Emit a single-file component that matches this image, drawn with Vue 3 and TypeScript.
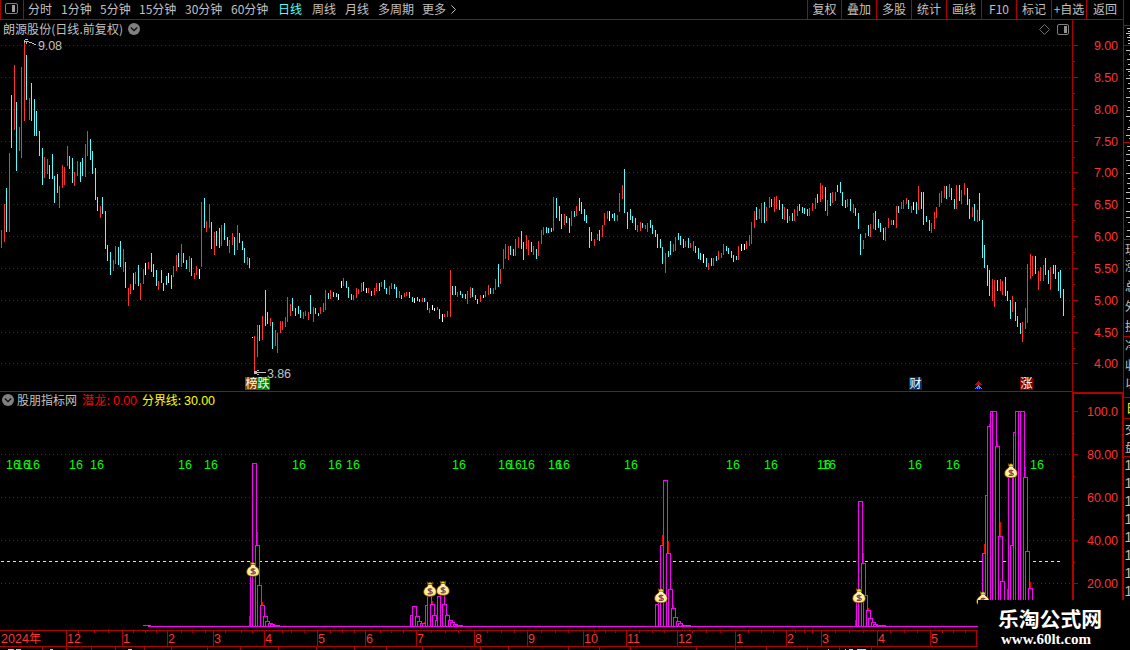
<script setup lang="ts">
interface Candle { x: number; top: number; h: number; kind: string }
interface Bar { x: number; top: number }

const periods = ['分时', '1分钟', '5分钟', '15分钟', '30分钟', '60分钟', '日线', '周线', '月线', '多周期', '更多']
const tools = ['复权', '叠加', '多股', '统计', '画线', 'F10', '标记', '+自选', '返回']

// One entry per session: colour code, x, high, low
const candleData = `
r1,230,248 r4,204,242 c6,188,232 r9,153,232 c11,95,148 r14,65,130 c16,102,171 r19,127,151 r21,67,158 r24,43,121
c26,55,100 r29,98,120 c31,83,121 c34,99,136 c36,111,136 c39,131,156 c42,148,185 r44,157,178 r47,159,174 c49,165,179
c52,154,179 c54,176,203 c57,174,193 r59,186,208 r62,165,188 r64,167,185 r67,146,166 c69,156,169 c72,158,183 r74,172,186
r77,161,176 c80,162,182 c82,158,176 r85,144,177 r87,131,156 c90,139,160 c92,151,174 c95,168,200 c97,197,211 r100,206,218
c102,197,214 c105,211,249 c107,245,261 c110,252,275 r113,260,271 r115,246,264 c118,247,265 c120,241,267 r123,249,272 c125,262,288
r128,288,306 r130,284,294 c133,273,290 r135,272,284 c138,265,286 r140,283,300 r143,269,284 w145,263,275 r148,262,269 c151,253,272
c153,264,277 c156,270,286 r158,281,290 c161,270,283 c163,283,291 c166,276,285 w168,273,283 c171,275,289 r173,266,277 r176,255,271
c178,253,267 r181,244,267 c183,253,263 c186,260,269 r189,256,272 c191,258,276 r194,273,279 r196,266,275 w199,269,279 r201,202,267
c204,198,228 r206,221,232 r209,204,228 c211,222,249 r214,232,255 c216,231,246 c219,228,248 r221,225,246 c224,223,240 c227,237,246
r229,240,253 r232,233,245 c234,237,255 r237,225,250 c239,233,243 c242,241,250 c244,248,263 r247,257,265 c249,258,268 w252,337,338
r254,336,371 r257,325,357 c259,325,341 r262,316,340 c265,290,326 c267,312,324 r270,318,326 c272,322,349 r275,330,346 r277,333,353
r280,321,333 r282,321,330 r285,317,327 r287,297,322 r290,304,316 c292,298,311 c295,308,316 c298,306,314 c300,310,318 r303,312,319
r305,311,316 r308,312,320 c310,295,314 r313,307,322 c315,308,314 c318,313,316 r320,307,314 r323,303,312 r325,290,310 c328,293,299
r330,290,299 c333,292,297 c336,293,297 w338,294,300 w341,281,288 r343,278,286 c346,281,288 c348,287,298 c351,294,300 r353,295,300
r356,288,298 r358,289,294 r361,283,292 c363,282,291 w366,288,293 r368,288,293 c371,291,296 r374,288,295 r376,283,291 c379,283,291
r381,282,287 c384,280,289 c386,288,294 r389,286,295 r391,283,289 c394,284,289 c396,287,298 r399,291,298 c401,295,299 r404,293,297
r406,292,296 c409,292,298 c412,297,302 w414,298,303 c417,297,301 c419,299,302 r422,298,302 c424,298,302 c427,302,310 r429,308,313
w432,305,310 w434,308,311 r437,307,310 c439,309,319 w442,314,322 r444,314,317 r447,311,317 r450,270,317 c452,286,295 c455,286,295
r457,292,297 c460,291,295 c462,294,298 c465,294,299 r467,291,304 r470,287,298 c472,288,297 c475,295,300 c477,299,304 r480,295,302
w483,295,298 r485,291,297 r488,285,295 c490,288,294 r493,288,294 r495,279,290 c498,264,287 r500,269,284 r503,249,269 r505,244,259
r508,246,260 c510,246,255 c513,249,256 r515,239,256 r518,237,248 c521,231,249 c523,242,260 r526,235,249 r528,240,255 c531,242,252
r533,246,255 c536,249,259 r538,241,256 r541,230,244 r543,227,235 c546,227,233 c548,228,233 c551,228,232 r553,197,231 c556,198,218
c559,206,221 c561,214,229 r564,214,225 c566,216,223 c569,218,233 r571,211,226 c574,211,217 r576,206,216 c579,198,211 c581,202,214
c584,209,221 c586,215,223 c589,227,248 c591,232,241 r594,239,246 r597,234,240 c599,230,241 r602,225,237 r604,213,225 r607,211,219
w609,211,221 c612,214,218 c614,213,221 r617,215,221 r619,193,212 r622,185,199 c624,169,213 c627,212,229 c630,209,220 c632,216,223
c635,218,230 r637,225,232 r640,222,231 c642,223,228 r645,225,229 r647,223,232 c650,220,228 c652,225,234 c655,230,237 c657,234,248
c660,239,248 c662,247,264 r665,253,273 c668,251,257 c670,241,255 r673,244,252 r675,237,251 c678,233,240 c680,236,245 c683,239,248
r685,241,247 c688,238,248 r690,243,248 r693,241,251 c695,246,253 c698,248,259 c700,253,260 w703,254,263 c706,258,267 r708,263,270
c711,258,266 r713,258,266 c716,256,261 r718,251,260 r721,253,258 r723,244,255 c726,246,251 c728,248,254 c731,251,258 c733,255,262
c736,256,260 r738,246,260 w741,244,251 w744,244,250 r746,241,249 r749,235,246 r751,222,244 r754,211,228 c756,207,220 r759,209,219
r761,203,223 c764,202,223 r766,207,221 r769,197,208 c771,199,207 r774,197,212 r776,196,209 c779,200,210 c782,204,219 r784,207,220
c787,209,223 r789,216,221 c792,213,221 r794,209,221 r797,206,216 c799,204,211 c802,207,213 c804,208,214 c807,209,216 r809,208,216
r812,203,211 r815,198,209 c817,194,203 r820,183,202 r822,185,199 c825,187,211 r827,200,216 c830,193,206 r832,192,203 r835,192,201
c837,185,192 c840,182,193 c842,192,206 c845,200,208 r847,199,207 c850,199,211 r853,204,213 c855,208,216 c858,213,229 c860,234,255
r863,240,249 r865,233,238 c868,225,236 r870,224,237 r873,213,229 c875,211,230 c878,219,228 c880,223,232 c883,228,240 r885,227,241
r888,218,228 r891,220,225 c893,220,225 r896,206,228 c898,206,213 r901,202,209 r903,200,209 r906,198,204 c908,200,209 r911,206,213
w913,202,210 c916,202,214 r918,186,210 c921,192,209 c923,192,225 c926,216,222 c929,220,231 r931,223,233 r934,212,229 r936,207,218
r939,193,207 r941,191,203 r944,186,198 c946,186,199 r949,184,197 c951,188,200 c954,199,209 r956,185,209 c959,185,201 r961,190,204
r964,183,195 c967,188,205 c969,199,219 r972,207,217 c974,204,221 r977,210,222 c979,193,221 c982,220,258 c984,245,268 c987,265,286
c989,270,296 r992,279,301 r994,280,307 c997,280,291 r1000,279,291 r1002,281,295 c1005,277,296 c1007,291,301 c1010,300,319 r1012,296,312
c1015,302,321 c1017,316,327 c1020,323,334 r1022,322,342 r1025,308,329 r1027,264,323 r1030,254,279 r1032,256,276 c1035,256,274 r1038,271,290
r1040,267,281 r1043,265,281 c1045,258,275 c1048,270,284 r1050,267,290 c1053,265,274 c1055,265,279 c1058,272,291 c1060,270,298 c1063,289,316`

const candles: Candle[] = candleData.trim().split(/\s+/).map((s) => {
  const [x, top, bottom] = s.slice(1).split(',').map(Number)
  return { kind: s[0], x, top, h: bottom - top }
})

const parseBars = (s: string): Bar[] => s.trim().split(/\s+/).map((p) => {
  const [x, top] = p.split(',').map(Number)
  return { x, top }
})

const bars = parseBars(`252,575 254,463 257,545 259,585 262,605 265,616 267,621 270,623 272,624 275,625 277,625
412,615 414,606 417,616 419,621 422,623 424,623 427,605 429,596 432,604 434,615 437,620 439,596 442,594 444,604 447,615 450,620 452,622 455,624 457,625 460,625
657,604 660,592 662,545 665,480 668,553 670,589 673,608 675,617 678,621 680,623 683,625 685,625 688,625
858,595 860,501 863,563 865,595 868,610 870,618 873,622 875,624 878,625 880,625 883,625
984,553 987,495 989,426 992,411 994,411 997,446 1000,536 1002,581 1010,470 1012,545 1015,432 1017,411 1020,411 1022,411 1025,477 1027,551 1030,588`)

// Red stems: x, top, height
const stems = [
  [257, 532, 13], [262, 602, 3], [249, 616, 10], [432, 601, 3], [424, 622, 4], [447, 614, 1],
  [662, 535, 10], [668, 541, 12], [673, 605, 3], [863, 553, 10], [868, 608, 2], [855, 620, 6],
  [984, 544, 9], [989, 424, 2], [997, 441, 5], [1000, 522, 14], [1007, 589, 12], [1025, 467, 10], [1030, 582, 6],
]

const priceTicks = [45, 77, 109, 141, 172, 204, 236, 268, 300, 332, 363].map((y, i) => ({ y, label: (9 - i * 0.5).toFixed(2) }))
const priceMinor = [61, 93, 125, 157, 188, 220, 252, 284, 316, 348]
const indTicks = [
  { y: 411, label: '100.0' }, { y: 454, label: '80.00' }, { y: 497, label: '60.00' },
  { y: 540, label: '40.00' }, { y: 583, label: '20.00' },
]
const indMinor = [433, 476, 519, 562]
const gridLines = [...priceTicks.map((t) => t.y), 454, 497, 540, 583]

const signals = [7, 17, 27, 70, 91, 179, 205, 293, 329, 347, 453, 499, 509, 522, 549, 557, 625, 727, 765, 818, 823, 909, 947, 1031]
const bags = [[246, 561], [423, 581], [436, 580], [654, 587.5], [852, 587.5], [1004, 462.5], [976, 590.5]]

const months = [
  { x: 66, t: '12' }, { x: 122, t: '1' }, { x: 167, t: '2' }, { x: 213, t: '3' }, { x: 264, t: '4' }, { x: 317, t: '5' },
  { x: 365, t: '6' }, { x: 416, t: '7' }, { x: 474, t: '8' }, { x: 527, t: '9' }, { x: 583, t: '10' }, { x: 626, t: '11' },
  { x: 677, t: '12' }, { x: 735, t: '1' }, { x: 786, t: '2' }, { x: 821, t: '3' }, { x: 877, t: '4' }, { x: 930, t: '5' }, { x: 976, t: '' },
]
const weekTicks = [78, 94, 108, 133, 145, 156, 181, 192, 205, 225, 241, 252, 282, 291, 304, 330, 342, 354, 380, 391, 403, 431, 445, 458,
  487, 501, 514, 541, 555, 568, 594, 605, 615, 639, 652, 664, 692, 706, 720, 748, 761, 773, 795, 804, 812, 835, 849, 863, 890, 904, 917, 942, 953, 965]
const lowerTicks = [42, 66, 91, 115, 144, 171, 207, 240, 278, 316, 354, 386, 422, 480, 508, 568, 599, 630, 696, 735, 766, 807, 839, 871]
const sideRules = [25, 45, 142, 239, 336, 397, 418, 456]
// Left edges of the quote column's row labels: y, inset
const sideDashes = [
  [28, 1], [31, 2], [33, 0], [35, 3], [37, 1], [40, 2], [43, 2], [50, 0], [54, 3], [59, 1], [64, 2], [69, 0], [71, 2], [75, 3], [78, 0],
  [83, 2], [88, 1], [91, 3], [97, 0], [101, 2], [107, 2], [110, 1], [116, 0], [120, 3], [127, 2], [129, 1], [135, 0], [138, 3],
  [146, 1], [150, 2], [154, 0], [160, 0], [165, 2], [173, 0], [178, 2], [183, 1], [188, 2], [192, 0], [198, 0], [202, 2], [211, 0],
  [217, 0], [222, 2], [230, 1], [236, 0],
]
const sideGlyphs = [
  { t: '现', y: 254 }, { t: '涨', y: 271 }, { t: '总', y: 291 }, { t: '外', y: 311 },
  { t: '换', y: 331 }, { t: '净', y: 350 }, { t: '收', y: 370 }, { t: '以', y: 388 },
]
const sideOnes = [465, 483, 501, 519, 537, 555, 573, 591]
const badges = [
  { x: 245, t: '榜', c: '#804000' }, { x: 257, t: '跌', c: '#008000' },
  { x: 909, t: '财', c: '#003468' }, { x: 1020, t: '涨', c: '#800000' },
]
</script>

<template>
  <div class="app">
    <header class="toolbar">
      <div class="panel-toggle">
        <svg width="13" height="11" viewBox="0 0 13 11">
          <rect x=".5" y=".5" width="12" height="10" rx="1.5" fill="none" stroke="#808080" />
          <rect x="7" y="2" width="3" height="7" fill="#a0a0a0" />
        </svg>
      </div>
      <nav class="periods">
        <span v-for="p in periods" :key="p" :class="{ active: p === '日线' }">{{ p }}<svg v-if="p === '更多'" class="more" width="6" height="9" viewBox="0 0 6 9"><path d="M.5 .5 4.5 4.5 .5 8.5" fill="none" stroke="#c0c0c0" /></svg></span>
      </nav>
      <nav class="tools">
        <span v-for="t in tools" :key="t">{{ t }}</span>
      </nav>
    </header>

    <svg class="chart" width="1130" height="650" viewBox="0 0 1130 650" shape-rendering="crispEdges">
      <defs>
        <radialGradient id="gold" cx=".5" cy=".5" r=".6">
          <stop offset="0" stop-color="#fff8dc" /><stop offset=".55" stop-color="#fff0a0" /><stop offset="1" stop-color="#f0dc00" />
        </radialGradient>
        <symbol id="bag" viewBox="0 0 14 16">
          <path d="M4 1 5.5 2 7 1 8.500 2 10 1 9 4H5Z" fill="#f0d818" stroke="#6b4414" stroke-width=".7" />
          <path d="M5 4h4l.7 1.500C12 6.500 13.400 8.500 13.400 11c0 3-2.400 4.400-6.400 4.400S.6 14 .6 11c0-2.500 1.400-4.500 3.700-5.500Z" fill="url(#gold)" stroke="#5c3414" stroke-width=".8" />
          <path d="M5.300 4.700h3.400" stroke="#fff" stroke-width="1.200" />
          <path d="M9.300 8.400C8.500 7.600 5 7.500 5 9.100s4.400 1 4.400 2.600-3.500 1.600-4.600.6M7.100 6.900v6.600" fill="none" stroke="#804040" stroke-width="1.200" />
        </symbol>
      </defs>

      <g class="grid">
        <line v-for="y in gridLines" :key="y" x1="1" x2="1071" :y1="y + .5" :y2="y + .5" />
      </g>
      <g>
        <rect v-for="c in candles" :key="c.x" :class="c.kind" :x="c.x" :y="c.top" width="1" :height="c.h" />
      </g>

      <g class="frame">
        <path d="M0 391.500H1072M1072.500 20V392M1123.500 0V392" />
        <path d="M0 630.500H978M0 646.500H978" />
        <path class="thick" d="M1073 601V393H1123V601" />
        <path v-for="t in priceTicks" :key="t.y" :d="`M1073 ${t.y + .5}h5`" />
        <path v-for="y in priceMinor" :key="y" :d="`M1073 ${y + .5}h2`" />
        <path v-for="t in indTicks" :key="t.y" :d="`M1074 ${t.y + .5}h4`" />
        <path v-for="y in indMinor" :key="y" :d="`M1074 ${y + .5}h1`" />
        <path v-for="m in months" :key="m.x" :d="`M${m.x + .5} 630v17`" />
        <path v-for="x in weekTicks" :key="x" :d="`M${x + .5} 631v2`" />
        <path v-for="x in lowerTicks" :key="x" :d="`M${x + .5} 647v3`" />
        <path v-for="y in sideRules" :key="y" :d="`M1124 ${y + .5}h6`" />
      </g>

      <g class="side">
        <path v-for="d in sideDashes" :key="d[0]" :d="`M${1126 + d[1]} ${d[0] + .5}H1130`" stroke="#c0c0c0" />
        <text v-for="g in sideGlyphs" :key="g.y" x="1125" :y="g.y">{{ g.t }}</text>
        <text class="yellow" x="1126" y="413">日</text>
        <text x="1125" y="434">交</text>
        <text x="1125" y="452">盘</text>
        <text v-for="y in sideOnes" :key="y" class="one" x="1124.500" :y="y + 5">1</text>
      </g>

      <g class="axis">
        <text v-for="t in priceTicks" :key="t.y" x="1094" :y="t.y + 5" textLength="24">{{ t.label }}</text>
        <text v-for="t in indTicks" :key="t.y" x="1087" :y="t.y + 5" textLength="31">{{ t.label }}</text>
        <text x="1" y="643" textLength="28">2024</text>
        <text class="cjk" x="29" y="643">年</text>
        <text v-for="m in months" :key="m.x" x="0" y="643" :transform="`translate(${m.x + 1} 0)`">{{ m.t }}</text>
      </g>

      <g class="heading">
        <text x="3" y="34" textLength="120">朗源股份(日线.前复权)</text>
        <text x="17" y="404.500" textLength="60">股朋指标网</text>
        <text class="red" x="82" y="404.500" textLength="28">潜龙:</text>
        <text class="red num" x="113" y="404.500" textLength="24">0.00</text>
        <text class="yellow" x="142" y="404.500" textLength="39">分界线:</text>
        <text class="yellow num" x="184" y="404.500" textLength="31">30.00</text>
        <text class="num" x="38" y="50" textLength="24">9.08</text>
        <text class="num" x="267" y="378" textLength="24">3.86</text>
      </g>

      <g class="smooth">
        <circle cx="134" cy="29" r="6" fill="#808080" />
        <path d="M130.800 27.500 134 30.500 137.200 27.500" fill="none" stroke="#101010" stroke-width="1.300" />
        <circle cx="8" cy="400" r="6" fill="#808080" />
        <path d="M4.800 398.500 8 401.500 11.200 398.500" fill="none" stroke="#101010" stroke-width="1.300" />
        <path d="M1044.500 24.500 1049.500 29.500 1044.500 34.500 1039.500 29.500Z" fill="none" stroke="#707070" />
        <rect x="1057.500" y="24.500" width="11" height="10" rx="1.500" fill="none" stroke="#808080" />
        <rect x="1064" y="26" width="3" height="7" fill="#909090" />
      </g>
      <path d="M25 39h3v1h-3zM24 40h1v3h-1zM25 41h4v1h-4zM29 42h3v1h-3zM32 43h2v1h-2zM34 44h2v1h-2zM26 42h1v2h-1z" fill="#c0c0c0" />
      <path d="M254 371h2v3h-2zM256 372h10v1h-10zM256 371h1v3h-1zM257 370h2v1h-2zM257 374h2v1h-2z" fill="#c0c0c0" />

      <g v-for="b in badges" :key="b.t" class="badge">
        <path :d="`M${b.x} 377h11l2 2v11h-13z`" :fill="b.c" />
        <text :x="b.x + .5" y="388">{{ b.t }}</text>
      </g>
      <path d="M978 381h1v1h1v1h1v1h1v1h-7v-1h1v-1h1v-1h1z" fill="#d00000" />
      <path d="M978 385h1v1h1v1h1v1h1v1h-7v-1h1v-1h1v-1h1z" fill="#20a0ff" />
      <path d="M976 388h1v1h-1zM978 387h1v2h-1zM980 388h1v1h-1z" fill="#1010e0" />

      <g class="signals">
        <text v-for="x in signals" :key="x" x="0" y="469" textLength="14" :transform="`translate(${x - 1} 0)`">16</text>
      </g>

      <line class="threshold" x1="1" x2="1061" y1="561.500" y2="561.500" />
      <g>
        <rect v-for="s in stems" :key="s[0]" :x="s[0]" :y="s[1]" width="1" :height="s[2]" fill="#f00" />
      </g>
      <path class="mag" d="M143 625.500h8M148 626.500H978" />
      <g class="mag">
        <rect v-for="b in bars" :key="b.x" :x="b.x - 1.5" :y="b.top + .5" width="4" :height="626 - b.top" />
      </g>
      <g class="smooth">
        <use v-for="b in bags" :key="b[0]" href="#bag" :x="b[0]" :y="b[1]" width="14" height="16" />
      </g>
      <path d="M128 649.500h4M8 649.500h6M16 649.500h5M50 649.500h3M828 649.500h1" stroke="#c0c0c0" />
      <path d="M845 649.500h1M849 649.500h4M857 649.500h9" stroke="#50ffff" />
    </svg>

    <aside class="watermark">
      <strong>乐淘公式网</strong>
      <span>www.60lt.com</span>
    </aside>
  </div>
</template>

<style>
html, body { margin: 0; background: #000; overflow: hidden; }
</style>

<style scoped>
.app {
  position: relative;
  width: 1130px;
  height: 650px;
  overflow: hidden;
  background: #000;
  color: #c0c0c0;
  font: 12px "Noto Sans CJK SC", sans-serif;
}
.toolbar {
  display: flex;
  width: 1123px;
  height: 20px;
  box-sizing: border-box;
  border-bottom: 1px solid #b00000;
  line-height: 18px;
  white-space: nowrap;
}
.panel-toggle {
  width: 24px;
  height: 19px;
  box-sizing: border-box;
  border-left: 1px solid #b00000;
  border-right: 1px solid #b00000;
  padding: 3px 0 0 4px;
  line-height: 0;
}
.periods {
  display: grid;
  grid-template-columns: 33px 39px 39px 46px 46px 47px 34px 33px 33px 44px 40px;
  padding-left: 4px;
}
.periods .active { color: #50ffff; }
.more { margin-left: 5px; }
.tools {
  display: grid;
  grid-template-columns: 34px repeat(7, 35px) 37px;
  margin-left: auto;
}
.tools span {
  border-left: 1px solid #b00000;
  text-align: center;
}
.chart { position: absolute; inset: 0; }
.grid line { stroke: #a80000; stroke-dasharray: 1 3; }
.r { fill: #ff3232; }
.c { fill: #54ffff; }
.w { fill: #fff; }
.frame path { fill: none; stroke: #b00000; }
.frame .thick { stroke-width: 2; }
.axis text, .heading .num, .signals text { font-family: "Liberation Sans", sans-serif; font-size: 12.5px; }
.axis text { fill: #ff3232; }
.axis .cjk { font-family: "Noto Sans CJK SC", sans-serif; font-size: 12px; }
.heading text { fill: #c0c0c0; }
.heading .red { fill: #f00; }
.heading .yellow, .side .yellow { fill: #ff0; }
.side text { fill: #c0c0c0; }
.side .one { font-family: "Liberation Sans", sans-serif; font-size: 14px; }
.signals text { fill: #0f0; }
.badge text { fill: #fff; }
.smooth { shape-rendering: geometricPrecision; }
.threshold { stroke: #ff0; stroke-dasharray: 3 3; }
.mag, .mag rect { stroke: #f0f; fill: #000; }
.watermark {
  position: absolute;
  left: 978px;
  top: 600px;
  width: 152px;
  height: 50px;
  display: flex;
  flex-direction: column;
  align-items: flex-start;
  background: #000;
  color: #fff;
}
.watermark strong { margin: 5px 0 0 20px; font-size: 20.800px; line-height: 26px; height: 25px; }
.watermark span { margin-left: 23px; font: bold 15px/18px "Liberation Serif", serif; }
</style>
